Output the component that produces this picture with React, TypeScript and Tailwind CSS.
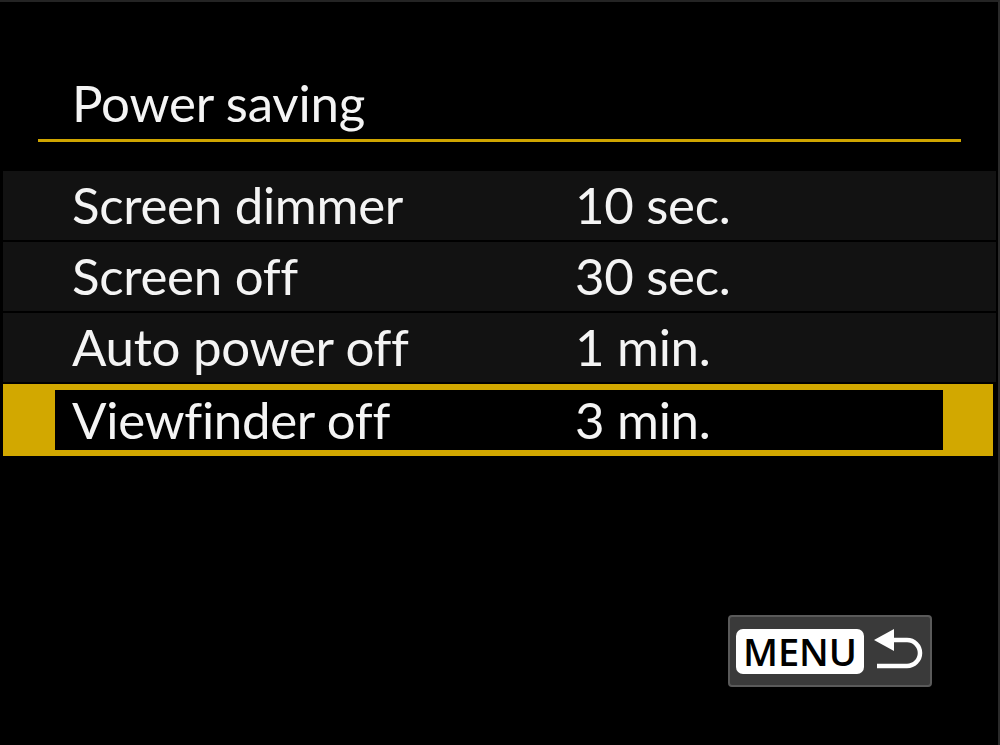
import React from "react";

const rows = [
  { label: "Screen dimmer", value: "10 sec." },
  { label: "Screen off", value: "30 sec." },
  { label: "Auto power off", value: "1 min." },
];

function ReturnIcon() {
  return (
    <svg width="52" height="44" viewBox="0 0 52 44" className="block">
      <polygon points="0,11 20,0 20,22" fill="#ffffff" />
      <path d="M18 11 H33 A13 13 0 0 1 33 37 H3" fill="none" stroke="#ffffff" strokeWidth="4.5" />
    </svg>
  );
}

export default function App() {
  return (
    <div
      className="w-[1000px] h-[745px] bg-black border-t-2 border-t-[#242424] border-r-2 border-r-[#2a2a2a] flex flex-col overflow-hidden [font-variant-ligatures:none]"
      style={{ fontFamily: "Lato, 'Open Sans', sans-serif" }}
    >
      <div className="pl-[72px] pt-[75px] h-[137px] text-[51px] leading-[52px] text-[#f4f4f4] tracking-[-0.2px]">
        Power saving
      </div>
      <div className="ml-[38px] w-[923px] h-[3px] bg-[#cfa500]" />
      <div className="mt-[29px] flex flex-col gap-[2px]">
        {rows.map((r) => (
          <div
            key={r.label}
            className="ml-[3px] w-[993px] h-[69px] bg-[#121212] flex items-center text-[51px] leading-none text-[#f4f4f4] tracking-[-0.3px]"
          >
            <span className="w-[572px] pl-[69px] pb-[2px]">{r.label}</span>
            <span className="pb-[2px]">{r.value}</span>
          </div>
        ))}
        <div className="ml-[3px] w-[990px] h-[72px] bg-[#d2a800] pl-[52px] pr-[50px] py-[6px] flex">
          <div className="flex-1 bg-black flex items-center text-[51px] leading-none text-[#f4f4f4] tracking-[-0.3px]">
            <span className="w-[520px] pl-[17px] pb-[2px]">Viewfinder off</span>
            <span className="pb-[2px]">3 min.</span>
          </div>
        </div>
      </div>
      <div className="flex-1 flex items-end justify-end pr-[66px] pb-[58px]">
        <div className="w-[204px] h-[72px] bg-[#3a3a3a] border-2 border-[#5a5a5a] rounded-[4px] flex items-center pl-[6px] gap-[10px]">
          <div
            className="w-[128px] h-[45px] bg-white rounded-[7px] flex items-center justify-center text-[38px] leading-none font-semibold text-black"
            style={{ fontFamily: "'Open Sans', sans-serif" }}
          >
            MENU
          </div>
          <ReturnIcon />
        </div>
      </div>
    </div>
  );
}
